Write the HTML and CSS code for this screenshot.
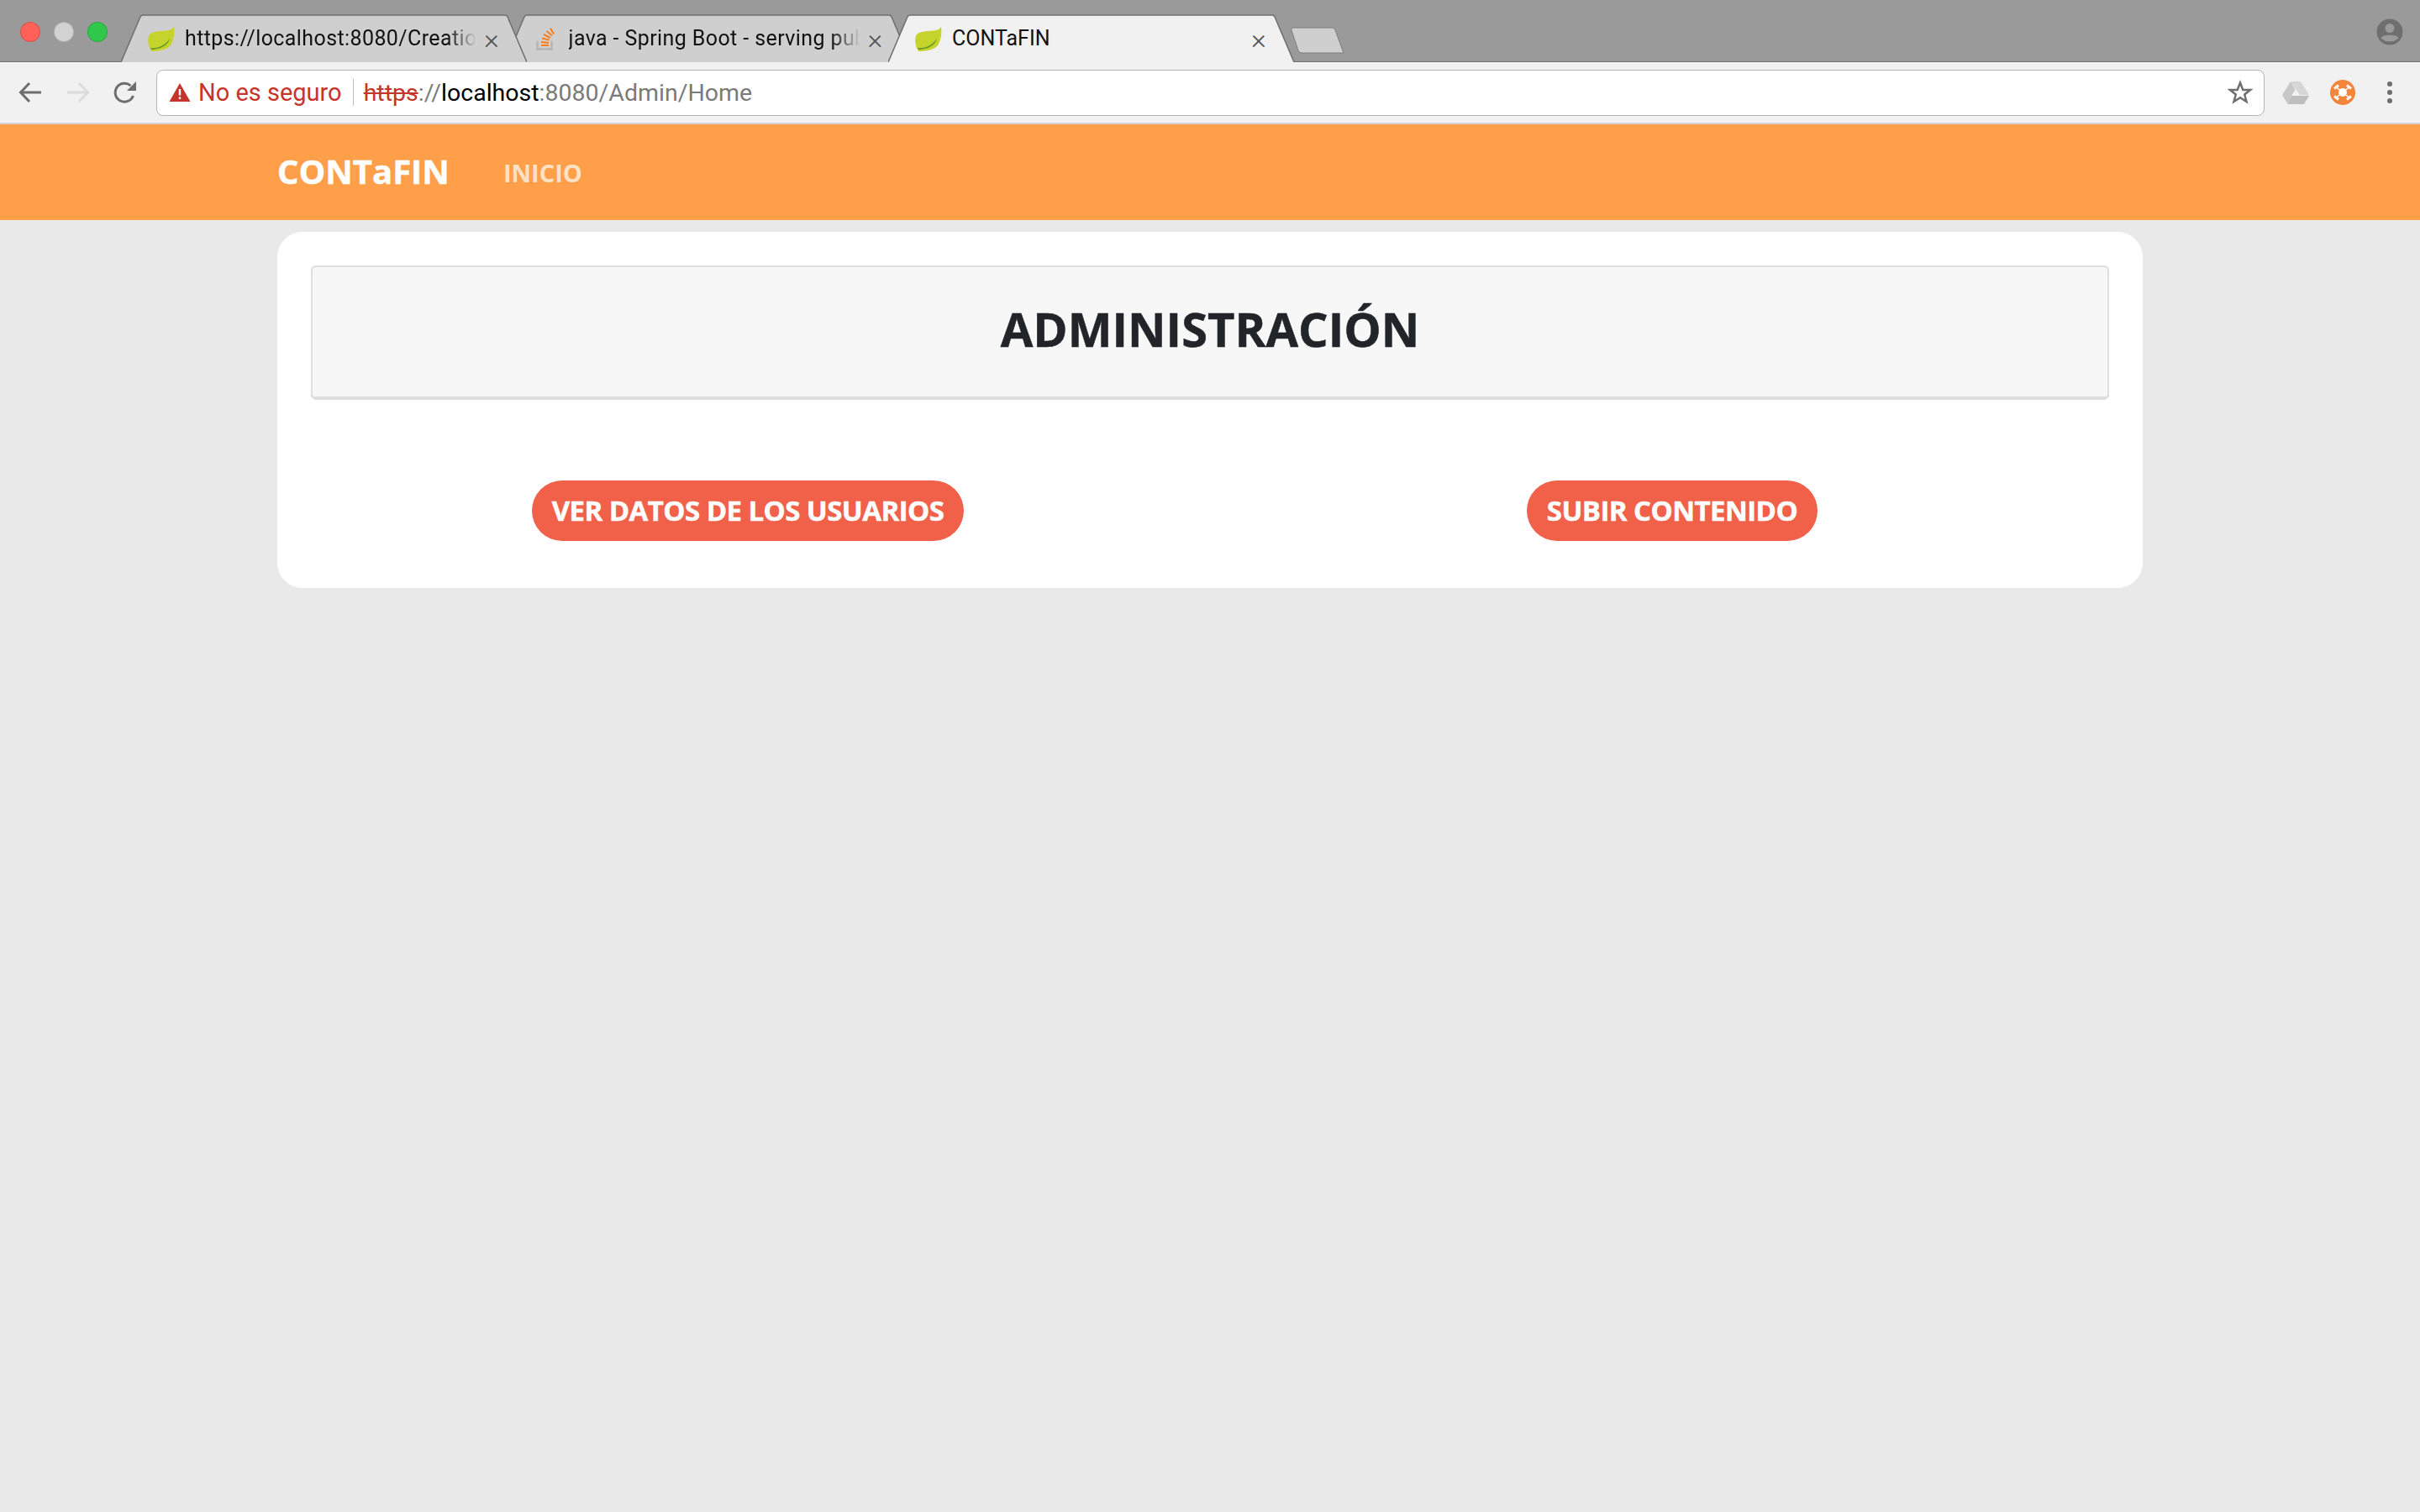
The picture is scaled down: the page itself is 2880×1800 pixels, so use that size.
FILE: index.html
```html
<!DOCTYPE html>
<html lang="es">
<head>
    <meta charset="UTF-8">
    <meta name="viewport" content="width=device-width, initial-scale=1">
    <title>CONTaFIN</title>
    <link rel="stylesheet" href="styles.css">
</head>
<body>
    <svg class="defs" width="0" height="0">
        <defs>
            <symbol id="leaf" viewBox="0 0 32 30">
                <path d="M31 1C29 4 26 5 22 5.500C14 6 3 6 1 12C-1 18 1 26 4 30C12 30 22 29 27 23C31 17 32 8 31 1Z" fill="#c6d32d"/>
                <path d="M3 26C11 27 20 24 26 15C24 22 18 26 11 27C8 28 5 28 4 28Z" fill="#5f9a2c"/>
            </symbol>
        </defs>
    </svg>

    <div class="browser">
        <div class="titlebar">
            <div class="lights">
                <span class="light light-red"></span>
                <span class="light light-grey"></span>
                <span class="light light-green"></span>
            </div>
            <div class="tabs">
                <div class="tab tab-back tab-first">
                    <svg class="tab-shape" viewBox="0 0 483 57"><path d="M0 57L23 3Q24 1 26 1H457Q459 1 460 3L483 57"/></svg>
                    <svg class="tab-icon" width="32" height="30"><use href="#leaf"/></svg>
                    <span class="tab-title fade">https://localhost:8080/Creation</span>
                    <span class="tab-close">×</span>
                </div>
                <div class="tab tab-back tab-second">
                    <svg class="tab-shape" viewBox="0 0 483 57"><path d="M0 57L23 3Q24 1 26 1H457Q459 1 460 3L483 57"/></svg>
                    <svg class="tab-icon tab-icon-so" width="24" height="28" viewBox="0 0 24 28">
                        <path d="M1.500 17V26.500H18.500V17" fill="none" stroke="#b5b5b5" stroke-width="2.500"/>
                        <path d="M6 22H15M6 18L15 19M7 13.500L15.500 15.500M9 9L17 13M12.500 5L19 10.500M17 1.500L21 8.500" fill="none" stroke="#f48024" stroke-width="2"/>
                    </svg>
                    <span class="tab-title fade">java - Spring Boot - serving public</span>
                    <span class="tab-close">×</span>
                </div>
                <div class="tab tab-active">
                    <svg class="tab-shape" viewBox="0 0 483 57"><path d="M0 57L23 3Q24 1 26 1H457Q459 1 460 3L483 57"/></svg>
                    <svg class="tab-icon" width="32" height="30"><use href="#leaf"/></svg>
                    <span class="tab-title">CONTaFIN</span>
                    <span class="tab-close">×</span>
                </div>
                <svg class="new-tab" width="64" height="32" viewBox="0 0 64 32"><path d="M4 1H49Q52 1 53 4L63 31H13Q10 31 9 28L1 4Q0 1 4 1Z"/></svg>
            </div>
            <svg class="profile" width="32" height="32" viewBox="0 0 32 32">
                <circle cx="16" cy="16" r="15.500" fill="#6f6f6f"/>
                <circle cx="16" cy="11.500" r="5.500" fill="#9a9a9a"/>
                <path d="M5.500 23C8 18.500 24 18.500 26.500 23C24 26 20 27.500 16 27.500C12 27.500 8 26 5.500 23Z" fill="#9a9a9a"/>
            </svg>
        </div>

        <div class="toolbar">
            <svg class="nav-icon" width="28" height="28" viewBox="0 0 28 28"><path d="M27 14H3M13 3L2.500 14L13 25" fill="none" stroke="#6e6e6e" stroke-width="3"/></svg>
            <svg class="nav-icon" width="28" height="28" viewBox="0 0 28 28"><path d="M1 14H25M15 3L25.500 14L15 25" fill="none" stroke="#dcdcdc" stroke-width="3"/></svg>
            <svg class="nav-icon nav-icon-reload" width="28" height="28" viewBox="0 0 28 28">
                <path d="M23.500 18A11 11 0 1 1 20.500 6" fill="none" stroke="#6e6e6e" stroke-width="3"/>
                <path d="M27 1V12H16Z" fill="#6e6e6e"/>
            </svg>

            <div class="omnibox">
                <svg class="warn" width="26" height="24" viewBox="0 0 26 24">
                    <path d="M13 1L25.500 23H0.500Z" fill="#c5352b"/>
                    <path d="M11.800 8H14.200V15.500H11.800ZM11.800 17.500H14.200V20H11.800Z" fill="#fff"/>
                </svg>
                <span class="not-secure">No es seguro</span>
                <span class="divider"></span>
                <span class="url"><s class="scheme">https</s>://<span class="host">localhost</span>:8080/Admin/Home</span>
                <svg class="star" width="30" height="30" viewBox="0 0 30 30"><path d="M15 3.500L18.300 12H27L20.200 17.500L22.500 26L15 21.200L7.500 26L9.800 17.500L3 12H11.700Z" fill="none" stroke="#6e6e6e" stroke-width="2.500"/></svg>
            </div>

            <div class="extensions">
                <svg width="32" height="28" viewBox="0 0 32 28">
                    <path d="M10 1L15.500 10.500L6 27L0 17Z" fill="#c8c8c8"/>
                    <path d="M10 1H22L32 17H21Z" fill="#d6d6d6"/>
                    <path d="M11 18H32L26 28H6Z" fill="#bebebe"/>
                </svg>
                <svg width="30" height="30" viewBox="0 0 30 30">
                    <circle cx="15" cy="15" r="15" fill="#f5853a"/>
                    <circle cx="15" cy="15" r="5" fill="#fff"/>
                    <path d="M15 15L7.500 9M15 15L22.500 9M15 15L7.500 21M15 15L22.500 21" stroke="#fff" stroke-width="1.500"/>
                    <path d="M5 10.500L10 6.500M20 6.500L25 10.500M5 19.500L10 23.500M20 23.500L25 19.500" stroke="#fff" stroke-width="3"/>
                </svg>
                <div class="menu-dots"><span></span><span></span><span></span></div>
            </div>
        </div>
    </div>

    <nav class="navbar">
        <a class="brand" href="#">CONTaFIN</a>
        <a class="nav-link" href="#">INICIO</a>
    </nav>

    <main class="card">
        <div class="jumbotron">
            <h1>ADMINISTRACIÓN</h1>
        </div>
        <div class="actions">
            <div class="action"><a class="btn" href="#">VER DATOS DE LOS USUARIOS</a></div>
            <div class="action"><a class="btn" href="#">SUBIR CONTENIDO</a></div>
        </div>
    </main>
</body>
</html>
```
FILE: styles.css
```css
* {
    box-sizing: border-box;
}

body {
    font-family: 'Open Sans', sans-serif;
    margin: 0;
    min-height: 100vh;
    overflow: hidden;
    background-color: #e9e9e9;
}

a {
    text-decoration: none;
}

.defs {
    display: block;
    height: 0;
}

/* browser chrome */
.browser {
    font-family: 'Roboto', 'Liberation Sans', sans-serif;
}

.titlebar {
    height: 74px;
    display: flex;
    background-color: #9a9a9a;
    border-bottom: 1px solid #6f6f6f;
}

.lights {
    display: flex;
    gap: 16px;
    padding: 26px 0 0 24px;
    width: 144px;
    flex-shrink: 0;
}

.light {
    width: 24px;
    height: 24px;
    border-radius: 50%;
    border: 1px solid rgba(0, 0, 0, 0.15);
}

.light-red {
    background-color: #ff6159;
}

.light-grey {
    background-color: #d2d2d2;
}

.light-green {
    background-color: #30c74a;
}

.tabs {
    display: flex;
    align-items: flex-end;
    flex: 1;
    height: 74px;
}

.tab {
    position: relative;
    width: 483px;
    height: 57px;
    margin-right: -26.5px;
    padding: 0 30px 0 32px;
    display: flex;
    align-items: center;
    font-size: 25px;
    color: #111;
}

.tab-first {
    z-index: 2;
}

.tab-second {
    z-index: 1;
}

.tab-active {
    z-index: 3;
}

.tab-shape {
    position: absolute;
    left: 0;
    top: 0;
    width: 100%;
    height: 100%;
}

.tab-shape path {
    stroke: #6f6f6f;
    stroke-width: 1.5;
    fill: #cfcfcf;
}

.tab-active .tab-shape path {
    fill: #f1f1f1;
}

.tab-icon,
.tab-title,
.tab-close {
    position: relative;
}

.tab-icon {
    flex-shrink: 0;
    margin-right: 12px;
}

.tab-icon-so {
    margin: 0 15px 0 5px;
}

.tab-title {
    flex: 1;
    white-space: nowrap;
    overflow: hidden;
}

.fade {
    letter-spacing: 0.4px;
    -webkit-mask-image: linear-gradient(to right, #000 90%, transparent 100%);
    mask-image: linear-gradient(to right, #000 90%, transparent 100%);
}

.tab-close {
    font-size: 34px;
    line-height: 1;
    font-weight: 300;
    color: #555;
    width: 24px;
    margin-left: 6px;
    text-align: center;
}

.new-tab {
    position: relative;
    z-index: 0;
    margin: 0 0 10px 22px;
    flex-shrink: 0;
}

.new-tab path {
    fill: #cfcfcf;
    stroke: #7d7d7d;
}

.profile {
    margin: 22px 20px 0 0;
    flex-shrink: 0;
}

.toolbar {
    height: 74px;
    display: flex;
    align-items: center;
    padding: 0 20px 0 22px;
    background-color: #f1f1f1;
    border-bottom: 2px solid #d3d3d3;
}

.nav-icon {
    margin-right: 29px;
    flex-shrink: 0;
}

.nav-icon-reload {
    margin-left: -1px;
}

.omnibox {
    margin-left: -6px;
    width: 2509px;
    height: 55px;
    display: flex;
    align-items: center;
    padding: 0 12px 0 14px;
    background-color: white;
    border: 1px solid #b5b5b5;
    border-radius: 8px;
    font-size: 29px;
    color: #7a7a7a;
}

.warn {
    flex-shrink: 0;
}

.not-secure {
    margin-left: 9px;
    color: #c5352b;
}

.divider {
    width: 1px;
    height: 32px;
    margin: 0 12px 0 13px;
    background-color: #bdbdbd;
}

.scheme {
    color: #c5352b;
}

.host {
    color: #000;
}

.url {
    flex: 1;
    font-size: 28.5px;
}

.star {
    margin-right: 1px;
}

.extensions {
    display: flex;
    align-items: center;
    gap: 25px;
    margin-left: 21px;
}

.menu-dots {
    display: flex;
    flex-direction: column;
    gap: 4px;
    margin-left: 13px;
}

.menu-dots span {
    width: 6px;
    height: 6px;
    border-radius: 50%;
    background-color: #6e6e6e;
}

/* page */
.navbar {
    height: 114px;
    display: flex;
    align-items: center;
    padding-left: 330px;
    background-color: #ff9f4a;
}

.brand {
    font-size: 40px;
    font-weight: 700;
    color: white;
    margin: 0 64px 4px 0;
    -webkit-text-stroke: 0.5px white;
}

.nav-link {
    font-size: 29px;
    font-weight: 700;
    color: rgba(255, 255, 255, 0.7);
}

.card {
    width: 2220px;
    height: 424px;
    margin: 14px auto 0;
    padding: 40px 10px 0;
    background-color: white;
    border-radius: 30px;
}

.jumbotron {
    height: 160px;
    margin: 0 30px 96px;
    padding-bottom: 9px;
    display: flex;
    align-items: center;
    justify-content: center;
    background-color: #f7f7f7;
    border: 2px solid #dedede;
    border-bottom-width: 4px;
    border-radius: 6px;
}

h1 {
    margin: 0;
    font-size: 56px;
    font-weight: 700;
    color: #212529;
    -webkit-text-stroke: 0.5px #212529;
}

.actions {
    display: grid;
    grid-template-columns: 1fr 1fr;
}

.action {
    text-align: center;
}

.btn {
    display: inline-block;
    height: 72px;
    line-height: 72px;
    padding: 0 24px;
    border-radius: 36px;
    background-color: #f16048;
    color: white;
    font-size: 33px;
    font-weight: 700;
    letter-spacing: -0.56px;
    -webkit-text-stroke: 0.5px white;
}
```
